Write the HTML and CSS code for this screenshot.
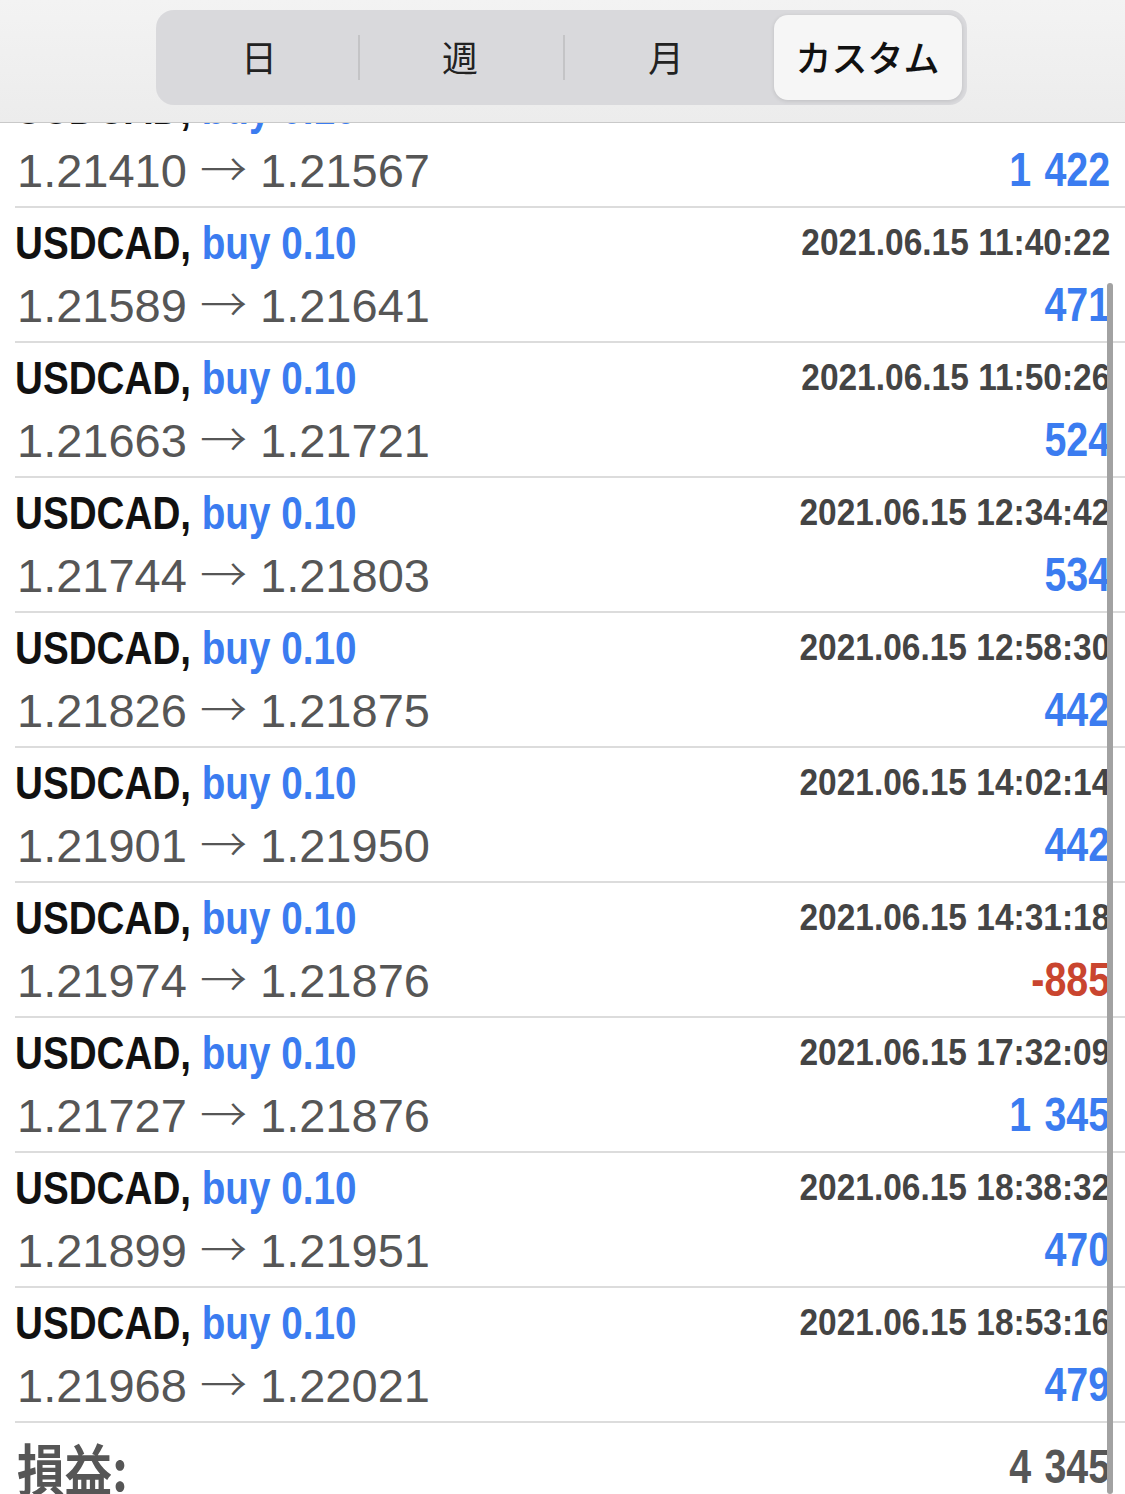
FILE: index.html
```html
<!DOCTYPE html>
<html lang="ja">
<head>
    <meta charset="UTF-8">
    <meta name="viewport" content="width=device-width, initial-scale=1.0">
    <title>履歴</title>
    <link rel="stylesheet" href="styles.css">
</head>
<body>
    <div class="header">
        <div class="segmented">
            <div class="seg">日</div>
            <div class="seg">週</div>
            <div class="seg">月</div>
            <div class="seg active">カスタム</div>
        </div>
    </div>

    <div class="list">
        <div class="trade">
            <div class="line"><span class="symbol">USDCAD, <span class="type">buy 0.10</span></span><span class="time">2021.06.15 11:21:05</span></div>
            <div class="line"><span class="prices">1.21410 <span class="arrow">→</span> 1.21567</span><span class="profit">1 422</span></div>
        </div>
        <div class="trade">
            <div class="line"><span class="symbol">USDCAD, <span class="type">buy 0.10</span></span><span class="time">2021.06.15 11:40:22</span></div>
            <div class="line"><span class="prices">1.21589 <span class="arrow">→</span> 1.21641</span><span class="profit">471</span></div>
        </div>
        <div class="trade">
            <div class="line"><span class="symbol">USDCAD, <span class="type">buy 0.10</span></span><span class="time">2021.06.15 11:50:26</span></div>
            <div class="line"><span class="prices">1.21663 <span class="arrow">→</span> 1.21721</span><span class="profit">524</span></div>
        </div>
        <div class="trade">
            <div class="line"><span class="symbol">USDCAD, <span class="type">buy 0.10</span></span><span class="time">2021.06.15 12:34:42</span></div>
            <div class="line"><span class="prices">1.21744 <span class="arrow">→</span> 1.21803</span><span class="profit">534</span></div>
        </div>
        <div class="trade">
            <div class="line"><span class="symbol">USDCAD, <span class="type">buy 0.10</span></span><span class="time">2021.06.15 12:58:30</span></div>
            <div class="line"><span class="prices">1.21826 <span class="arrow">→</span> 1.21875</span><span class="profit">442</span></div>
        </div>
        <div class="trade">
            <div class="line"><span class="symbol">USDCAD, <span class="type">buy 0.10</span></span><span class="time">2021.06.15 14:02:14</span></div>
            <div class="line"><span class="prices">1.21901 <span class="arrow">→</span> 1.21950</span><span class="profit">442</span></div>
        </div>
        <div class="trade">
            <div class="line"><span class="symbol">USDCAD, <span class="type">buy 0.10</span></span><span class="time">2021.06.15 14:31:18</span></div>
            <div class="line"><span class="prices">1.21974 <span class="arrow">→</span> 1.21876</span><span class="profit loss">-885</span></div>
        </div>
        <div class="trade">
            <div class="line"><span class="symbol">USDCAD, <span class="type">buy 0.10</span></span><span class="time">2021.06.15 17:32:09</span></div>
            <div class="line"><span class="prices">1.21727 <span class="arrow">→</span> 1.21876</span><span class="profit">1 345</span></div>
        </div>
        <div class="trade">
            <div class="line"><span class="symbol">USDCAD, <span class="type">buy 0.10</span></span><span class="time">2021.06.15 18:38:32</span></div>
            <div class="line"><span class="prices">1.21899 <span class="arrow">→</span> 1.21951</span><span class="profit">470</span></div>
        </div>
        <div class="trade">
            <div class="line"><span class="symbol">USDCAD, <span class="type">buy 0.10</span></span><span class="time">2021.06.15 18:53:16</span></div>
            <div class="line"><span class="prices">1.21968 <span class="arrow">→</span> 1.22021</span><span class="profit">479</span></div>
        </div>
        <div class="total">
            <span class="total-label">損益:</span>
            <span class="total-value">4 345</span>
        </div>
    </div>

    <div class="scrollbar"></div>
</body>
</html>
```

FILE: styles.css
```css
:root {
    --blue: #3b7cf0;
    --red: #c9452f;
    --text: #111111;
    --muted: #565656;
    --time: #444444;
    --line: #dcdcdc;
}
html, body { margin: 0; }
body {
    width: 1125px;
    height: 1494px;
    overflow: hidden;
    position: relative;
    background: #ffffff;
    font-family: "Liberation Sans", "Noto Sans CJK JP", sans-serif;
    color: var(--text);
}

/* header with segmented control, floats over the list */
.header {
    position: absolute;
    top: 0; left: 0; right: 0;
    height: 123px;
    background: linear-gradient(#f3f3f3, #ececec);
    border-bottom: 1px solid #c9c9c9;
    display: flex;
    justify-content: center;
    align-items: flex-start;
    padding-top: 10px;
    box-sizing: border-box;
    z-index: 10;
}
.segmented {
    width: 811px;
    height: 95px;
    margin-left: -3px;
    padding: 5px;
    box-sizing: border-box;
    background: #d9d9dc;
    border-radius: 18px;
    display: grid;
    grid-template-columns: 197px 205px 207px 1fr;
}
.seg {
    display: flex;
    align-items: center;
    justify-content: center;
    font-family: "Noto Sans CJK JP", sans-serif;
    font-size: 36px;
    line-height: 1;
    padding-bottom: 4px;
    color: #222;
    position: relative;
}
.seg + .seg::before {
    content: "";
    position: absolute;
    left: 0;
    top: 20px;
    bottom: 20px;
    width: 2px;
    background: #c4c4c6;
}
.seg.active {
    margin-left: 4px;
    background: #f6f6f6;
    border-radius: 14px;
    font-weight: 500;
    color: #111;
    box-shadow: 0 1px 4px rgba(0, 0, 0, 0.12);
}
.seg.active::before { display: none; }

/* trade list */
.list { padding-top: 73px; }
.trade {
    margin-left: 15px;
    padding: 4px 15px 5px 0;
    border-bottom: 2px solid var(--line);
}
.line {
    display: flex;
    justify-content: space-between;
    align-items: center;
    height: 62px;
    white-space: nowrap;
}
.symbol {
    display: inline-block;
    font-weight: 700;
    font-size: 46px;
    color: var(--text);
    transform: scaleX(0.84);
    transform-origin: left center;
}
.type { color: var(--blue); }
.time {
    display: inline-block;
    font-weight: 700;
    font-size: 36px;
    color: var(--time);
    transform: scaleX(0.93);
    transform-origin: right center;
}
.prices {
    font-size: 47px;
    line-height: 1;
    color: var(--muted);
    margin-left: 2px;
    margin-bottom: 3px;
}
.arrow {
    font-family: "Noto Sans CJK JP", sans-serif;
    font-weight: 300;
    line-height: 1;
}
.profit {
    display: inline-block;
    font-weight: 700;
    font-size: 48px;
    line-height: 1;
    word-spacing: 3px;
    color: var(--blue);
    transform: scaleX(0.82);
    transform-origin: right center;
}
.profit.loss { color: var(--red); }

.total {
    margin-left: 15px;
    padding: 4px 15px 0 0;
    height: 80px;
    display: flex;
    justify-content: space-between;
    align-items: center;
    white-space: nowrap;
}
.total-label {
    display: inline-block;
    font-family: "Noto Sans CJK JP", sans-serif;
    font-weight: 700;
    font-size: 56px;
    line-height: 1;
    color: var(--muted);
    margin-left: 2px;
    transform: scaleX(0.85);
    transform-origin: left center;
}
.total-value {
    display: inline-block;
    font-weight: 700;
    font-size: 48px;
    line-height: 1;
    word-spacing: 3px;
    color: var(--muted);
    transform: scaleX(0.82);
    transform-origin: right center;
}

.scrollbar {
    position: absolute;
    left: 1107px;
    top: 283px;
    bottom: 0;
    width: 6px;
    border-radius: 3px;
    background: #a2a2a2;
}
```
